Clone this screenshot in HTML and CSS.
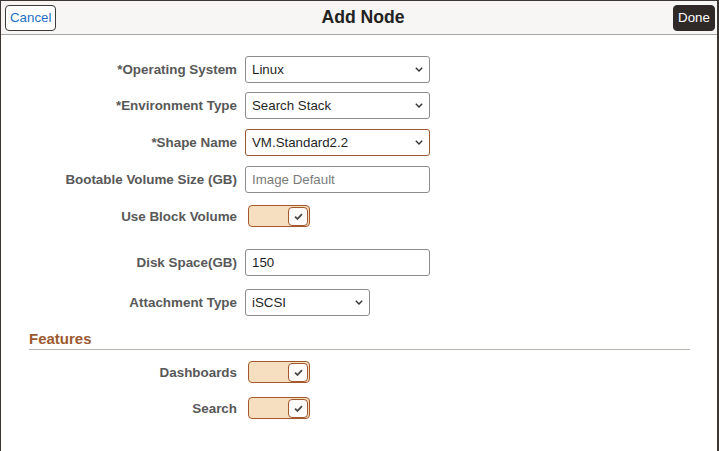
FILE: index.html
```html
<!DOCTYPE html>
<html>
<head>
<meta charset="utf-8">
<link rel="stylesheet" href="styles.css">
</head>
<body>
<div class="frame">
  <header class="bar">
    <div class="side"><button class="btn btn-cancel">Cancel</button></div>
    <h1 class="title">Add Node</h1>
    <div class="side right"><button class="btn btn-done">Done</button></div>
  </header>
  <main class="form">
    <div class="row r1">
      <label class="lbl">*Operating System</label>
      <div class="field select w185">Linux</div>
    </div>
    <div class="row r2">
      <label class="lbl">*Environment Type</label>
      <div class="field select w185">Search Stack</div>
    </div>
    <div class="row r2">
      <label class="lbl">*Shape Name</label>
      <div class="field select w185 focus">VM.Standard2.2</div>
    </div>
    <div class="row r2">
      <label class="lbl">Bootable Volume Size (GB)</label>
      <div class="field w185 placeholder">Image Default</div>
    </div>
    <div class="row r2">
      <label class="lbl">Use Block Volume</label>
      <div class="toggle"><span class="knob"><svg viewBox="0 0 10 8" width="9" height="7"><path d="M1 4.2 L3.8 6.8 L9 1.2" fill="none" stroke="#4a4a4a" stroke-width="2"/></svg></span></div>
    </div>
    <div class="row r6">
      <label class="lbl">Disk Space(GB)</label>
      <div class="field w185">150</div>
    </div>
    <div class="row r7">
      <label class="lbl">Attachment Type</label>
      <div class="field select w125">iSCSI</div>
    </div>
    <h2 class="section">Features</h2>
    <div class="row r8">
      <label class="lbl">Dashboards</label>
      <div class="toggle"><span class="knob"><svg viewBox="0 0 10 8" width="9" height="7"><path d="M1 4.2 L3.8 6.8 L9 1.2" fill="none" stroke="#4a4a4a" stroke-width="2"/></svg></span></div>
    </div>
    <div class="row r9">
      <label class="lbl">Search</label>
      <div class="toggle"><span class="knob"><svg viewBox="0 0 10 8" width="9" height="7"><path d="M1 4.2 L3.8 6.8 L9 1.2" fill="none" stroke="#4a4a4a" stroke-width="2"/></svg></span></div>
    </div>
  </main>
</div>
</body>
</html>
```
FILE: styles.css
```css
* { box-sizing: border-box; }
html, body { margin: 0; padding: 0; }
body {
  font-family: "Liberation Sans", Arial, sans-serif;
  background: #ffffff;
  width: 719px;
  height: 451px;
  overflow: hidden;
}
.frame {
  width: 719px;
  height: 451px;
  border-left: 1px solid #3b3632;
  border-right: 2px solid #3b3632;
  border-top: 1px solid #3b3632;
  background: #fff;
}
.bar {
  height: 34px;
  background: #f7f6f4;
  border-bottom: 1px solid #a9a7a5;
  display: grid;
  grid-template-columns: 1fr auto 1fr;
  align-items: center;
  padding: 0 2px 0 4px;
}
.side { display: flex; }
.side.right { justify-content: flex-end; }
.btn {
  height: 26px;
  border-radius: 4px;
  font-family: "Liberation Sans", Arial, sans-serif;
  font-size: 13.3px;
  padding: 0 4px;
}
.btn-cancel {
  background: #ffffff;
  border: 1px solid #3e3a37;
  color: #1f6fc5;
  width: 51px;
}
.btn-done {
  background: #2f2a27;
  border: 1px solid #2f2a27;
  color: #ffffff;
  width: 42px;
  padding: 0;
}
.title {
  margin: 0;
  font-size: 17.6px;
  font-weight: bold;
  color: #222;
  padding-left: 6px;
}
.form {
  padding-top: 21px;
}
.row {
  display: flex;
  align-items: center;
  height: 26px;
}
.r2 { margin-top: 10.8px; }
.r6 { margin-top: 20px; }
.r7 { margin-top: 14px; }
.r8 { margin-top: 9px; }
.r9 { margin-top: 10px; }
.lbl {
  width: 236px;
  text-align: right;
  font-size: 13.4px;
  font-weight: bold;
  color: #585858;
  margin-right: 8px;
}
.field {
  height: 27px;
  border: 1px solid #8d8d8d;
  border-radius: 3px;
  font-size: 13.3px;
  color: #1f1f1f;
  padding-left: 6px;
  display: flex;
  align-items: center;
  background: #fff;
}
.w185 { width: 185px; }
.w125 { width: 125px; }
.select {
  background-image: url("data:image/svg+xml;utf8,<svg xmlns='http://www.w3.org/2000/svg' width='8' height='5' viewBox='0 0 8 5'><path d='M0.8 0.8 L4 4 L7.2 0.8' fill='none' stroke='%23333' stroke-width='1.4'/></svg>");
  background-repeat: no-repeat;
  background-position: right 6px center;
}
.focus { border-color: #9c5630; }
.placeholder { color: #7b7b7b; }
.toggle {
  margin-left: 3px;
  width: 62px;
  height: 22px;
  background: #f5dfc0;
  border: 1px solid #a4582c;
  border-radius: 4px;
  display: flex;
  justify-content: flex-end;
  align-items: center;
  padding-right: 1px;
}
.knob {
  width: 20px;
  height: 19px;
  background: #fdfbf9;
  border: 1px solid #a4582c;
  border-radius: 4px;
  display: flex;
  align-items: center;
  justify-content: center;
}
.section {
  margin: 16px 27px 0 28px;
  font-size: 15px;
  font-weight: bold;
  color: #9b5a30;
  line-height: 16px;
  padding-bottom: 2px;
  border-bottom: 1px solid #b8b0aa;
}
```
